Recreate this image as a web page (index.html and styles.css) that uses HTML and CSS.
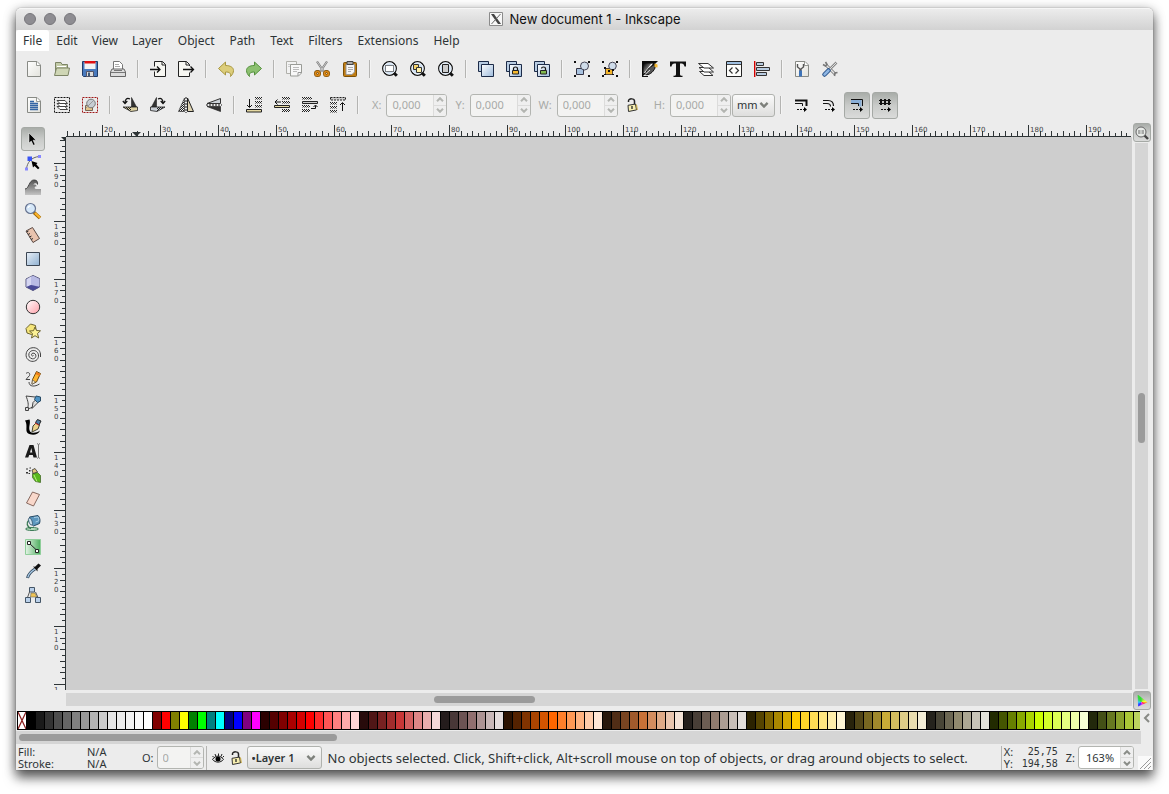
FILE: index.html
```html
<!DOCTYPE html>
<html lang="en">
<head>
<meta charset="utf-8">
<title>New document 1 - Inkscape</title>
<link rel="stylesheet" href="styles.css">
</head>
<body>
<svg class="defs" aria-hidden="true">
  <defs>
    <linearGradient id="g-blue" x1="0" y1="0" x2="1" y2="1"><stop offset="0" stop-color="#fff"/><stop offset="1" stop-color="#9dbbdc"/></linearGradient>
    <linearGradient id="g-sq" x1="0" y1="0" x2="1" y2="1"><stop offset="0" stop-color="#e9f0f8"/><stop offset="1" stop-color="#8fb0d0"/></linearGradient>
    <linearGradient id="g-pink" x1="0" y1="0" x2="1" y2="1"><stop offset="0" stop-color="#fff"/><stop offset="1" stop-color="#ff9fa8"/></linearGradient>
    <linearGradient id="g-green" x1="0" y1="0" x2="1" y2="0"><stop offset="0" stop-color="#e4f4e6"/><stop offset="1" stop-color="#4fae60"/></linearGradient>
    <linearGradient id="g-ink" x1="0" y1="0" x2="1" y2="1"><stop offset="0" stop-color="#000"/><stop offset="1" stop-color="#fff"/></linearGradient>
    <linearGradient id="g-paper" x1="0" y1="0" x2="1" y2="1"><stop offset="0" stop-color="#fff"/><stop offset="1" stop-color="#e2e2dc"/></linearGradient>
    <linearGradient id="g-wave" x1="0" y1="0" x2="0" y2="1"><stop offset="0" stop-color="#555"/><stop offset="1" stop-color="#c4c4c4"/></linearGradient>
    <pattern id="check" width="2" height="2" patternUnits="userSpaceOnUse"><path d="M0 0h1v1H0zM1 1h1v1H1z" fill="#222"/></pattern>
    <symbol id="chev-up" viewBox="0 0 8 5"><path d="M1 4.2 4 1.2l3 3" fill="none" stroke="currentColor" stroke-width="2"/></symbol>
    <symbol id="chev-down" viewBox="0 0 8 5"><path d="M1 .8 4 3.8l3-3" fill="none" stroke="currentColor" stroke-width="2"/></symbol>
    <symbol id="page" viewBox="0 0 16 16"><path d="M1.5.5h9.5l3.5 3.5v11.5h-13z" fill="url(#g-paper)" stroke="#888a85"/><path d="M10.5.8v3.7h3.7" fill="#fff" stroke="#999b96"/></symbol>
    <symbol id="lens" viewBox="0 0 16 16"><path d="m11.500 11.500 3.300 3.300" stroke="#111" stroke-width="3"/><circle cx="7.500" cy="7.500" r="6.800" fill="#cfe0f2" stroke="#111" stroke-width="1.300"/><circle cx="7.500" cy="7.500" r="5.700" fill="none" stroke="#fff" stroke-width=".8"/></symbol>
    <symbol id="twins" viewBox="0 0 16 16"><path d="M.5.5h10v10H.5z" fill="#b9cde3" stroke="#1c2b48"/><path d="M3.500 3.500h12v12h-12z" fill="url(#g-blue)" stroke="#1c2b48"/></symbol>
    <symbol id="lock" viewBox="0 0 16 16"><path d="M4.500 5V3.800c0-2.600 6-2.600 6 .2v3.500" fill="none" stroke="#222" stroke-width="1.500"/><path d="m4 8.300 7.500-1.200 1 5.800-8 1.600z" fill="#f7efb0" stroke="#333"/><path d="M12.500 7.500l.8 5.500" stroke="#c8a634"/><path d="M8 9v3" stroke="#222" stroke-width="1.300"/></symbol>
    <symbol id="group-shapes" viewBox="0 0 16 16"><path d="M0 0h2v2H0zM14 0h2v2h-2zM0 14h2v2H0zM14 14h2v2h-2z" fill="#111"/></symbol>
    <symbol id="bars" viewBox="0 0 16 16"><path d="M0 0h7v2.500H0zM0 4h7v2.500H0zM0 8h7v2.500H0z" fill="url(#check)"/></symbol>
  </defs>
</svg>

<div class="window">
  <header class="titlebar">
    <div class="lights"><i></i><i></i><i></i></div>
    <h1 class="title">
      <svg width="14" height="14" viewBox="0 0 14 14"><path d="M.5.5h13v13H.5z" fill="#f7f7f7" stroke="#8b8b8b"/><path d="M2 2h3l7 10H9z" fill="#444"/><path d="M11.500 2 2.500 12" stroke="#666" stroke-width="1"/></svg>
      New document 1 - Inkscape
    </h1>
  </header>

  <nav class="menubar">
    <button class="menu open">File</button><button class="menu">Edit</button><button class="menu">View</button><button class="menu">Layer</button><button class="menu wide">Object</button><button class="menu">Path</button><button class="menu wide">Text</button><button class="menu">Filters</button><button class="menu wide">Extensions</button><button class="menu">Help</button>
  </nav>

  <div class="toolbar">
    <button class="tb" aria-label="New"><svg class="ic"><use href="#page"/></svg></button>
    <button class="tb" aria-label="Open"><svg class="ic" viewBox="0 0 16 16"><path d="M1.500 13V1.500H7l1 2h5.500V7" fill="#c3cba8" stroke="#7c8465"/><path d="M3 5.500h9" stroke="#fff"/><path d="M.5 14.500 2.500 7h13l-1.500 7.500z" fill="#cfd6b5" stroke="#7c8465"/></svg></button>
    <button class="tb" aria-label="Save"><svg class="ic" viewBox="0 0 16 16"><path d="M.5.5h15v15h-14l-1-1z" fill="#4a7abd" stroke="#203c68"/><path d="M2.500 1h11v7h-11z" fill="#f2f2f2"/><path d="M2.500 0h11v2.500h-11z" fill="#e01010"/><path d="M4.500 10.500h7v5h-7z" fill="#ddd" stroke="#556"/><path d="M6 11.500h2V15H6z" fill="#3e5878"/></svg></button>
    <button class="tb" aria-label="Print"><svg class="ic" viewBox="0 0 16 16"><path d="M3.500 8V.5h6l3 3V8" fill="#fff" stroke="#777"/><path d="M5 3.500h4M5 5.500h5" stroke="#aaa"/><path d="M2 8h12l1.500 3v4.500H.5V11z" fill="#ddd" stroke="#666"/><path d="M1 11.500h14M4 9.500h8" stroke="#777"/></svg></button>
    <span class="sep"></span>
    <button class="tb" aria-label="Import"><svg class="ic" viewBox="0 0 16 16"><path d="M4.500 5.500v-5h8l3 3v12h-11v-5" fill="#f7f7f2" stroke="#222"/><path d="M12 .5v3.500h3.500" fill="none" stroke="#222"/><path d="M0 8.500h9M7 5.500l3 3-3 3" fill="none" stroke="#111" stroke-width="1.300"/></svg></button>
    <button class="tb" aria-label="Export"><svg class="ic" viewBox="0 0 16 16"><path d="M11.500 5V3.500l-3-3h-8v15h11v-4" fill="#f7f7f2" stroke="#222"/><path d="M8 .5v3.500h3.500" fill="none" stroke="#222"/><path d="M5 8.500h10M12.500 5.500l3 3-3 3" fill="none" stroke="#111" stroke-width="1.300"/></svg></button>
    <span class="sep"></span>
    <button class="tb" aria-label="Undo"><svg class="ic" viewBox="0 0 16 16"><path d="m.5 7.500 7-6.500v3.500c5 0 8 2 8 5 0 2-1 4-3 6 .5-3.500-1-4.500-5-4.500V14z" fill="#dccd7a" stroke="#a89740"/></svg></button>
    <button class="tb" aria-label="Redo"><svg class="ic" viewBox="0 0 16 16"><path d="m15.500 7.500-7-6.500v3.500c-5 0-8 2-8 5 0 2 1 4 3 6-.5-3.500 1-4.500 5-4.500V14z" fill="#8cc070" stroke="#54903d"/></svg></button>
    <span class="sep"></span>
    <button class="tb" aria-label="Copy"><svg class="ic" viewBox="0 0 16 16"><path d="M.5.5h10v12H.5z" fill="#f2f2f2" stroke="#b0b0ab"/><path d="M2 3.500h7M2 5.500h7" stroke="#ccc"/><path d="M4.500 3.500h11v8.500l-3 3h-8z" fill="#f8f8f8" stroke="#999b96"/><path d="M7 6.500h6M7 8.500h6M7 10.500h4" stroke="#bbb"/><path d="M12 15v-3.500h3.500" fill="none" stroke="#999"/></svg></button>
    <button class="tb" aria-label="Cut"><svg class="ic" viewBox="0 0 16 16"><path d="M3 .5 10 11M13 .5 6 11" stroke="#777" stroke-width="2.200"/><path d="M3 .5 10 11M13 .5 6 11" stroke="#ddd" stroke-width=".8"/><g fill="none" stroke="#7a4a00" stroke-width="3"><circle cx="3.500" cy="12.500" r="2"/><circle cx="12.500" cy="12.500" r="2"/></g><g fill="none" stroke="#d9881a" stroke-width="1.700"><circle cx="3.500" cy="12.500" r="2"/><circle cx="12.500" cy="12.500" r="2"/></g></svg></button>
    <button class="tb" aria-label="Paste"><svg class="ic" viewBox="0 0 16 16"><rect x="1.500" y="1.500" width="13" height="14" rx="1" fill="#c17d11" stroke="#7a4f08"/><path d="M4 3.500h8.500V11L10 13.500H4z" fill="#f6f6f6" stroke="#999"/><path d="M6 6.500h5M6 8.500h5M6 10.500h3" stroke="#aaa"/><path d="M5 .5h6v3H5z" fill="#aaa" stroke="#444"/></svg></button>
    <span class="sep"></span>
    <button class="tb" aria-label="Zoom selection"><svg class="ic" viewBox="0 0 16 16"><use href="#lens"/><path d="M3.500 4.500h8v6h-8z" fill="#fff" stroke="#111" stroke-dasharray="1 1"/></svg></button>
    <button class="tb" aria-label="Zoom drawing"><svg class="ic" viewBox="0 0 16 16"><use href="#lens"/><path d="M3.500 3.500h5v5h-5z" fill="#f7d36b" stroke="#333"/><path d="M6.500 6.500h5v5h-5z" fill="#fff0a8" stroke="#333"/></svg></button>
    <button class="tb" aria-label="Zoom page"><svg class="ic" viewBox="0 0 16 16"><use href="#lens"/><path d="M4.500 3.500h6v8h-6z" fill="#ccc" stroke="#222"/></svg></button>
    <span class="sep"></span>
    <button class="tb" aria-label="Duplicate"><svg class="ic"><use href="#twins"/></svg></button>
    <button class="tb" aria-label="Clone"><svg class="ic" viewBox="0 0 16 16"><use href="#twins"/><path d="M7.500 9V7.500c0-2 4-2 4 0V9" fill="none" stroke="#111" stroke-width="1.200"/><path d="M6.500 9.500h6v3.500h-6z" fill="#f5b92e" stroke="#222"/></svg></button>
    <button class="tb" aria-label="Unlink clone"><svg class="ic" viewBox="0 0 16 16"><use href="#twins"/><path d="M7.500 7.500c0-2 4-2 4 0V9" fill="none" stroke="#111" stroke-width="1.200"/><path d="M6.500 9.500h6v3.500h-6z" fill="#7fb84d" stroke="#222"/></svg></button>
    <span class="sep"></span>
    <button class="tb" aria-label="Group"><svg class="ic" viewBox="0 0 16 16"><use href="#group-shapes"/><path d="M2.500 7.500h7v6h-7z" fill="#a9c3e0" stroke="#334"/><circle cx="10.500" cy="5" r="4" fill="#cfdcea" stroke="#445"/></svg></button>
    <button class="tb" aria-label="Ungroup"><svg class="ic" viewBox="0 0 16 16"><use href="#group-shapes"/><path d="M3.500 7.500h7v6h-7z" fill="#f3b52b" stroke="#543"/><circle cx="10.500" cy="5" r="3.800" fill="#cfdcea" stroke="#445"/><path d="M2 6h2v2H2zM6 9h2v2H6zM10 8h2v2h-2zM2 13h2v1H2zM10 13h2v1h-2z" fill="#111"/></svg></button>
    <span class="sep"></span>
    <button class="tb" aria-label="Fill and stroke"><svg class="ic" viewBox="0 0 16 16"><path d="M0 0h16L0 16z" fill="#0a0a0a"/><path d="M1.500 2.500h9L1.500 13z" fill="url(#g-ink)"/><path d="m2 12 7-9 2-.5L4 12z" fill="#fff"/><path d="M13 3.500C9 5 5 8 3 13.500c4 1 8-2 10-6.500z" fill="#555" stroke="#111"/><path d="m12.500 2.500 3 1v3l-3-.5z" fill="#f4b72e"/><path d="m3 13.500 5-4.500" stroke="#ddd"/><path d="M0 15.500h6" stroke="#111"/></svg></button>
    <button class="tb" aria-label="Text and font"><svg class="ic" viewBox="0 0 16 16"><path d="M0 .5h16v5h-1.500C14 3 13 2.500 10 2.500V13c0 1.500.8 1.800 2.500 1.800V16h-9v-1.200C5.200 14.800 6 14.500 6 13V2.500C3 2.500 2 3 1.500 5.500H0z" fill="#111"/></svg></button>
    <button class="tb" aria-label="Layers"><svg class="ic" viewBox="0 0 16 16" fill="#fff" stroke="#333"><path d="M1.500 10.500h9l4.500 4H6z"/><path d="M1 6.500h9.500l5 4.500H6z"/><path d="M.5 2.500H10l5.500 4.500H6z"/></svg></button>
    <button class="tb" aria-label="XML editor"><svg class="ic" viewBox="0 0 16 16"><path d="M.5.500h15v15H.500z" fill="#fdfdfb" stroke="#222"/><path d="M1 1h14v2.500H1z" fill="#9fbfe0"/><path d="M1 3.500h14" stroke="#444"/><path d="m6.500 6.500-3 3 3 3M9.500 6.500l3 3-3 3" fill="none" stroke="#333" stroke-width="1.200"/></svg></button>
    <button class="tb" aria-label="Align"><svg class="ic" viewBox="0 0 16 16"><path d="M.7 0v16" stroke="#d40000" stroke-width="1.400"/><g fill="#b7cbe0" stroke="#333"><path d="M2.500 1.500h7v3h-7zM2.500 6.500h13v3h-13zM2.500 11.500h10v3h-10z"/></g></svg></button>
    <span class="sep"></span>
    <button class="tb" aria-label="Document properties"><svg class="ic" viewBox="0 0 16 16"><use href="#page"/><path d="M3.500 3v3l2.500 2v6M9.500 3v3L7 8v6" fill="none" stroke="#555" stroke-width="1.400"/><path d="M6.500 9.500v6" stroke="#3d73b8" stroke-width="3"/></svg></button>
    <button class="tb" aria-label="Preferences"><svg class="ic" viewBox="0 0 16 16"><path d="m4 4 9 9" stroke="#777" stroke-width="3"/><path d="m4 4 9 9" stroke="#e4e4e4" stroke-width="1.400"/><path d="M1 3.500 3.500 5 5 3.500 3.500 1M15.500 11.500l-2.500.5-.5 3" fill="none" stroke="#777" stroke-width="1.600"/><path d="M14.500 1.500 8 8" stroke="#888" stroke-width="2.500"/><path d="M14.500 1.500 8 8" stroke="#ddd"/><path d="m6.500 9.500-4 4" stroke="#244f86" stroke-width="4.500" stroke-linecap="round"/><path d="m6.500 9.500-4 4" stroke="#8db5e2" stroke-width="2.500" stroke-linecap="round"/></svg></button>
  </div>

  <div class="toolbar">
    <button class="tb" aria-label="Select all"><svg class="ic" viewBox="0 0 16 16"><use href="#page"/><path d="M4 4.500h4M4 6.500h8M4 8.500h8M4 10.500h8M4 12.500h8" stroke="#3465a4" stroke-width="1.300"/></svg></button>
    <button class="tb" aria-label="Select in all layers"><svg class="ic" viewBox="0 0 16 16"><path d="M.5.5h15v15H.5z" fill="none" stroke="#111" stroke-dasharray="2 1"/><g fill="#fff" stroke="#444"><path d="M3 9.500h8l2.500 3H6z"/><path d="M3 6.500h8l2.500 3H6z"/><path d="M3 3.500h8l2.500 3H6z"/></g></svg></button>
    <button class="tb" aria-label="Deselect"><svg class="ic" viewBox="0 0 16 16"><path d="M.5.500h15v15H.500z" fill="none" stroke="#a01818" stroke-dasharray="2 1"/><path d="M3.500 8.500h7v5h-7z" fill="#e3c48a" stroke="#765"/><circle cx="9" cy="6.500" r="4.300" fill="#c7cdd3" stroke="#777"/><path d="m4 11 7-7" stroke="#999"/></svg></button>
    <span class="sep"></span>
    <button class="tb" aria-label="Rotate left"><svg class="ic" viewBox="0 0 16 16"><path d="M9.500.5v9.500h5z" fill="#333" stroke="#222" stroke-width=".6"/><path d="m1 10 8 4.500 6.500-1v-3.500z" fill="#ddd2a4" stroke="#222" stroke-width=".8"/><path d="m1 10 8 4.500V10z" fill="url(#check)"/><path d="M8 2C5 .5 3 2 3 6M.8 4 3 6.500 5.300 4" fill="none" stroke="#111" stroke-width="1.200"/></svg></button>
    <button class="tb" aria-label="Rotate right"><svg class="ic" viewBox="0 0 16 16"><path d="M6.500.5v9.500h-5z" fill="#333" stroke="#222" stroke-width=".6"/><path d="m15 10-8 4.500-6.500-1v-3.500z" fill="#c9ced4" stroke="#222" stroke-width=".8"/><path d="m15 10-8 4.500V10z" fill="url(#check)"/><path d="M8 2c3-1.500 5 0 5 4M10.700 4 13 6.500 15.200 4" fill="none" stroke="#111" stroke-width="1.200"/></svg></button>
    <button class="tb" aria-label="Flip horizontal"><svg class="ic" viewBox="0 0 16 16"><path d="M6.500 1v13.500h-6z" fill="url(#check)" stroke="#333" stroke-width=".7"/><path d="M9.500 1v13.500h6z" fill="#ddd2b0" stroke="#222"/><path d="M8 0v16" stroke="#111" stroke-dasharray="2 1"/></svg></button>
    <button class="tb" aria-label="Flip vertical"><svg class="ic" viewBox="0 0 16 16"><path d="M14.500 6.500H1l13.500-5z" fill="#ccd2d8" stroke="#333"/><path d="M14.500 9.500H1l13.500 5z" fill="#333" stroke="#222" stroke-width=".7"/><path d="M0 8h16" stroke="#111" stroke-dasharray="2 1"/></svg></button>
    <span class="sep"></span>
    <button class="tb" aria-label="Lower to bottom"><svg class="ic" viewBox="0 0 16 16"><use href="#bars" x="9" width="16" height="16"/><path d="M3.500 2v8M1 8l2.500 2.500L6 8" fill="none" stroke="#111"/><path d="M.5 12.500h15v2.500H.5z" fill="#e6d9a2" stroke="#222"/></svg></button>
    <button class="tb" aria-label="Lower"><svg class="ic" viewBox="0 0 16 16"><path d="M8 0h8v2.500H8zM8 4h8v2.500H8zM8 12h8v3H8z" fill="url(#check)"/><path d="M.5 8.500h15v2H.5z" fill="#e6d9a2" stroke="#222"/><path d="M7 5H1M3.500 2.500 1 5l2.500 2.500" fill="none" stroke="#111"/></svg></button>
    <button class="tb" aria-label="Raise"><svg class="ic" viewBox="0 0 16 16"><path d="M0 0h10v2.500H0zM0 8h8v2.500H0zM0 12h8v3H0z" fill="url(#check)"/><path d="M.5 4.500h15v2H.5z" fill="#ccc" stroke="#222"/><path d="M9 11.500h4.500V8.500M11.500 10l2-2 2 2" fill="none" stroke="#111"/></svg></button>
    <button class="tb" aria-label="Raise to top"><svg class="ic" viewBox="0 0 16 16"><use href="#bars" y="5" width="16" height="16"/><path d="M.5.5h15v2.500H.5z" fill="#ccc" stroke="#222" stroke-dasharray="2 1"/><path d="M12.500 14V6M10 8l2.500-2.500L15 8" fill="none" stroke="#111"/></svg></button>
    <span class="sep"></span>
    <label class="flabel off" for="fx">X:</label>
    <span class="spin off"><input id="fx" value="0,000" disabled><span class="steps"><button disabled aria-label="Up"><svg><use href="#chev-up"/></svg></button><button disabled aria-label="Down"><svg><use href="#chev-down"/></svg></button></span></span>
    <label class="flabel off" for="fy">Y:</label>
    <span class="spin off"><input id="fy" value="0,000" disabled><span class="steps"><button disabled aria-label="Up"><svg><use href="#chev-up"/></svg></button><button disabled aria-label="Down"><svg><use href="#chev-down"/></svg></button></span></span>
    <label class="flabel off" for="fw">W:</label>
    <span class="spin off"><input id="fw" value="0,000" disabled><span class="steps"><button disabled aria-label="Up"><svg><use href="#chev-up"/></svg></button><button disabled aria-label="Down"><svg><use href="#chev-down"/></svg></button></span></span>
    <button class="tb" aria-label="Lock ratio"><svg class="ic"><use href="#lock"/></svg></button>
    <label class="flabel off" for="fh">H:</label>
    <span class="spin off"><input id="fh" value="0,000" disabled><span class="steps"><button disabled aria-label="Up"><svg><use href="#chev-up"/></svg></button><button disabled aria-label="Down"><svg><use href="#chev-down"/></svg></button></span></span>
    <span class="combo unit"><select aria-label="Unit"><option>mm</option></select><svg><use href="#chev-down"/></svg></span>
    <span class="sep"></span>
    <button class="tb" aria-label="Scale stroke width"><svg class="ic" viewBox="0 0 16 16"><path d="M2 3.500h11.500V9" fill="none" stroke="#111" stroke-width="2"/><path d="M2 6.500h7.500V9" fill="none" stroke="#111"/><path d="M4 12.500h9" stroke="#111" stroke-dasharray="2 1"/><path d="m11 10 3 2.500-3 2.500z"/></svg></button>
    <button class="tb" aria-label="Scale corners"><svg class="ic" viewBox="0 0 16 16"><path d="M2 3.500h5c4 0 5.500 2 5.500 5.500M2 6.500h4c2.500 0 3.500 1 3.500 3" fill="none" stroke="#111" stroke-width="1.200"/><path d="M4 12.500h9" stroke="#111" stroke-dasharray="2 1"/><path d="m11 10 3 2.500-3 2.500z"/></svg></button>
    <button class="tb on" aria-label="Move gradients"><svg class="ic" viewBox="0 0 16 16"><path d="M2 4.500h9v5" fill="none" stroke="#89aed6" stroke-width="3"/><path d="M2 2.500h11.500V9M2 6.500h7.500V9" fill="none" stroke="#111"/><path d="M4 12.500h9" stroke="#111" stroke-dasharray="2 1"/><path d="m11 10 3 2.500-3 2.500z"/></svg></button>
    <button class="tb on" aria-label="Move patterns"><svg class="ic" viewBox="0 0 16 16"><path d="M2 3.500h12M2 6.500h12" stroke="#111"/><path d="M4 2v6M8 2v6M12 2v6" stroke="#111" stroke-width="2"/><path d="M4 12.500h9" stroke="#111" stroke-dasharray="2 1"/><path d="m11 10 3 2.500-3 2.500z"/></svg></button>
  </div>

  <main class="work">
    <div class="tools">
      <button class="tool on" aria-label="Select"><svg class="ic" viewBox="0 0 16 16"><path d="M4 2v10l2.300-2 2 4.300 1.800-.8-2-4.300h3z" fill="#000" stroke="#fff" stroke-width=".5"/></svg></button>
      <button class="tool" aria-label="Node"><svg class="ic" viewBox="0 0 16 16"><path d="M1.500 14C2 8 6 2 14.500 1.500" fill="none" stroke="#666"/><path d="M0 12.500h3v3H0zM13 0h3v3h-3z" fill="#8888ff"/><path d="M2.500 1.500h4.500v4.500H2.500z" fill="#3a55f5"/><path d="m6.500 6 6 2-1.200 1.300 3.200 3.700-1.500 1.300L9.500 11 8 12.500z"/></svg></button>
      <button class="tool" aria-label="Tweak"><svg class="ic" viewBox="0 0 16 16"><path d="M0 10c4 0 4-9 9-9 3 0 4 2 3.500 4.500C11 3.500 9 4 8.500 6c2-1 3 0 3 1.500-2-.5-2.500 2-.5 2.500h5v6H0z" fill="url(#g-wave)"/><path d="M0 10c4 0 4-9 9-9 3 0 4 2 3.500 4.500" fill="none" stroke="#444"/></svg></button>
      <button class="tool" aria-label="Zoom"><svg class="ic" viewBox="0 0 16 16"><path d="m9 9.500 6 5.500" stroke="#9c6500" stroke-width="3.500"/><path d="m10 10 5 4.700" stroke="#fdb52c" stroke-width="2.200"/><circle cx="5.500" cy="5.500" r="5" fill="#d5e7f8" stroke="#667390" stroke-width="1.200"/><path d="M3 5c.3-1.500 1.200-2 2.500-2" fill="none" stroke="#fff" stroke-width="1.200"/></svg></button>
      <button class="tool" aria-label="Measure"><svg class="ic" viewBox="0 0 16 16"><path d="m1 4 6.500-3.500 7 11L8 15.500z" fill="#e9c3ae" stroke="#5b4a44"/><path d="m1.500 5 2-1M3 7.500l2-1M4.500 10l2-1M6 12.500l2-1" stroke="#333"/></svg></button>
      <button class="tool" aria-label="Rectangle"><svg class="ic" viewBox="0 0 16 16"><path d="M1.500 1.500h13v13h-13z" fill="url(#g-sq)" stroke="#3c4653"/></svg></button>
      <button class="tool" aria-label="3D box"><svg class="ic" viewBox="0 0 16 16"><path d="M1 4 8 .5l6.500 3v8.500L8 15.500 1 12z" fill="#8f91cc" stroke="#55557a"/><path d="M1.500 4.300 6 1.500v8.500l-4.500 2z" fill="#d5d6f1"/><path d="M6 1.500 8.500 1l6 3v7.500L6 10z" fill="#b9bbe4"/><path d="m6 10 8.500 2L8 15.500 1.500 12z" fill="#4a4a96"/></svg></button>
      <button class="tool" aria-label="Ellipse"><svg class="ic" viewBox="0 0 16 16"><circle cx="8" cy="8" r="6.700" fill="url(#g-pink)" stroke="#333"/></svg></button>
      <button class="tool" aria-label="Star"><svg class="ic" viewBox="0 0 16 16"><path d="m1 5.500 4.500-4.500 5 1.500.5 5-4.500 4-4.500-1.500z" fill="#f6e67a" stroke="#6d6430"/><path d="m10 4 1.500 3.500 4 .3-3 2.700 1.200 4.500-3.700-2.300L6.500 15l1-4.300-3-2.700 4-.3z" fill="#fbf195" stroke="#6d6430"/></svg></button>
      <button class="tool" aria-label="Spiral"><svg class="ic" viewBox="0 0 16 16"><path d="M8.500 8.500c-.5 1-2 .5-2-.8 0-1.700 2.500-2.200 3.700-.7C12 9.500 10 12 7.500 11.800 4.500 11.500 3.300 9 4 6.500 5 3.500 9 2.500 11.500 4.500c3 2.500 2.500 7-.5 9-3.500 2-8 .5-9.500-3C0 6 2.500 1.500 7 .8c5-.8 8 2.500 8.500 6.200v3" fill="none" stroke="#444"/></svg></button>
      <button class="tool" aria-label="Pencil"><svg class="ic" viewBox="0 0 16 16"><path d="M1 2.500C3 .5 5.500 2 4.500 4.500L1 8.500h4M4 11c0 5 6 5 10.500 2" fill="none" stroke="#444"/><path d="m7 13 .5-4.500 4-8 4 2-4 8.500z" fill="#ffb52d" stroke="#6d4b14"/><path d="m11.500 1 4 2-1 2-4-2z" fill="#ef7a1a"/><path d="m7.500 9 3 2L7 13.500z" fill="#fff2d0" stroke="#444" stroke-width=".6"/></svg></button>
      <button class="tool" aria-label="Bezier"><svg class="ic" viewBox="0 0 16 16"><path d="M2 14c6-1 8-4 10-8M1 1c2 5 3 9 1.500 12M1 1l9 1" fill="none" stroke="#444"/><path d="M.5 12.500h3v3h-3zM12 3.500l1 4-6 6 1-6z" fill="#ddd" stroke="#444"/><path d="m11 1 4.500 1v4l-3 1.500-3-3z" fill="#4f93c4" stroke="#274b66"/></svg></button>
      <button class="tool" aria-label="Calligraphy"><svg class="ic" viewBox="0 0 16 16"><path d="M0 1.500 4.500.5C6 4 3 8 5 12.500c2 2 7 1.500 10-1-2 5-9 5-12.500 2.500C0 11 3 6 0 1.500z"/><path d="m7 13 1-6 3-3 3.500 2-1.500 4z" fill="#ecd28a" stroke="#443"/><path d="m10.500 3.500 2-3 3.500 1.500-2 4z" fill="#4c7fa8" stroke="#222"/><path d="m10 4 4 2.200" stroke="#c33"/></svg></button>
      <button class="tool" aria-label="Text"><svg class="ic" viewBox="0 0 16 16"><path fill-rule="evenodd" d="M0 14.500 4.500 2h4L12 14.500H8.500L7.800 12H4.200l-.9 2.500zM5 9.500h2.300L6.300 5z" fill="#1a1a1a"/><path d="M13.500 1.500v13M12 .5l1.500 1 1.500-1M12 15.500l1.500-1 1.500 1" fill="none" stroke="#777"/></svg></button>
      <button class="tool" aria-label="Spray"><svg class="ic" viewBox="0 0 16 16"><path d="M1 1.500h2v1H1zM4 3h1.500v1.500H4zM1 5h2v1.500H1zM4.500.5H6v1H4.500zM3.500 6H5v1H3.500z" fill="#333"/><path d="m7.500 6.500 5-1 3 3v7l-5-1-3-4z" fill="#59b81d" stroke="#3b5e20" stroke-width=".7"/><path d="m7 3 3-1.500 2.500 3.500-4.500 1.500z" fill="#e4c680" stroke="#333" stroke-width=".8"/><path d="m9 8 3 6.500" stroke="#b6ee7c"/></svg></button>
      <button class="tool" aria-label="Eraser"><svg class="ic" viewBox="0 0 16 16"><path d="M7.500 1 14.500 3.500 8.500 15 1.500 12z" fill="#f9d8cb" stroke="#7a5a50" stroke-width=".9"/></svg></button>
      <button class="tool" aria-label="Paint bucket"><svg class="ic" viewBox="0 0 16 16"><ellipse cx="7" cy="14" rx="6.500" ry="1.500" fill="#b9dfc0" stroke="#3b7a55"/><path d="M4 5c-3 3-2 7 2 8.500" fill="none" stroke="#3b7a55" stroke-width="1.500"/><path d="m4.500 2 8.500-1.500c2 2 2.500 5 1.500 8L8.500 11C5.500 9 4 5 4.500 2z" fill="#5c97be" stroke="#274b66"/><path d="M9 2.500 13 2c1 1.500 1 3 .5 4l-3 1" fill="none" stroke="#a8cde4"/><ellipse cx="5.500" cy="6.500" rx="1.600" ry="3.800" transform="rotate(-20 5.500 6.500)" fill="#cfe3ee" stroke="#274b66" stroke-width=".7"/></svg></button>
      <button class="tool" aria-label="Gradient"><svg class="ic" viewBox="0 0 16 16"><path d="M.5.500h15v15H.500z" fill="url(#g-green)" stroke="#8fce9a"/><path d="m4 4 8 7.500" stroke="#222"/><path d="M2.500 2.500h3v3h-3zM10.500 10.500h3v3h-3z" fill="#fff" stroke="#222"/></svg></button>
      <button class="tool" aria-label="Dropper"><svg class="ic" viewBox="0 0 16 16"><path d="M10 6C6 8.500 3.500 11 2.500 15" fill="none" stroke="#34495e" stroke-width="3"/><path d="M10 6C6 8.500 3.500 11 2.700 14.500" fill="none" stroke="#a9cbe6" stroke-width="1.200"/><path d="m8 3.500 2 .2L13.500.5 16 2.500 12.500 6v2.500z" fill="#111"/></svg></button>
      <button class="tool" aria-label="Connector"><svg class="ic" viewBox="0 0 16 16"><path d="M4.500 5 2.500 10.500M10.500 5l2.500 5.500" stroke="#555"/><path d="m6 6 4 0 2 4H5.500z" fill="#f0c455" stroke="#665" stroke-width=".6"/><g fill="#b9d0ea" stroke="#445566"><path d="M4.500.5h5v4.500h-5zM.5 10.500h5v5h-5zM10.500 10.500h5v5h-5z"/></g></svg></button>
    </div>

    <div class="sheet">
      <svg class="ruler-x" id="ruler-x"></svg>
      <svg class="ruler-y" id="ruler-y"></svg>
      <div class="canvas"></div>
      <div class="hscroll"><div class="hthumb"></div></div>
    </div>

    <div class="side">
      <button class="corner" aria-label="Zoom if resized"><svg width="14" height="14" viewBox="0 0 14 14"><path d="m9 9 4 4" stroke="#444" stroke-width="2.400"/><circle cx="6" cy="6" r="5" fill="#e8ebe8" stroke="#666"/><path d="M4 4v4M8 4v4M6 4.500v1M6 6.500v1" stroke="#666"/></svg></button>
      <div class="vscroll"><div class="vthumb"></div></div>
      <button class="corner" aria-label="Color management"><span class="cms"></span></button>
    </div>
  </main>

  <div class="palette-row">
    <div class="palette" id="palette"></div>
    <button class="collapse" aria-label="Palette menu"><svg width="7" height="10" viewBox="0 0 7 10"><path d="M6 1 2 5l4 4" fill="none" stroke="#888a85" stroke-width="2"/></svg></button>
  </div>
  <div class="pscroll"><div class="pthumb"></div></div>

  <footer class="status">
    <div class="style"><span>Fill:</span><span>N/A</span><span>Stroke:</span><span>N/A</span></div>
    <label class="flabel" for="fo">O:</label>
    <span class="spin off opacity"><input id="fo" value="0" disabled><span class="steps"><button disabled aria-label="Up"><svg><use href="#chev-up"/></svg></button><button disabled aria-label="Down"><svg><use href="#chev-down"/></svg></button></span></span>
    <span class="vline"></span>
    <button class="mini" aria-label="Layer visibility"><svg class="ic" viewBox="0 0 16 16"><path d="M2.500 9.500c3-4.500 8-4.500 11 0-3 3.500-8 3.500-11 0z" fill="#ddd" stroke="#222"/><circle cx="8" cy="9" r="2.500"/><path d="M2.500 6 4 7.500M5 4l1 2.500M8.500 3.500V6M12 4l-1 2.500M14 6l-1.500 1.500" stroke="#222"/></svg></button>
    <button class="mini" aria-label="Layer lock"><svg class="ic"><use href="#lock"/></svg></button>
    <span class="combo layer"><select aria-label="Layer"><option>•Layer 1</option></select><svg><use href="#chev-down"/></svg></span>
    <p class="message">No objects selected. Click, Shift+click, Alt+scroll mouse on top of objects, or drag around objects to select.</p>
    <span class="vline"></span>
    <div class="coords"><span>X:</span><span class="num">25,75</span><span>Y:</span><span class="num">194,58</span></div>
    <label class="flabel" for="fz">Z:</label>
    <span class="spin zoom"><input id="fz" value="163%"><span class="steps"><button aria-label="Zoom in"><svg><use href="#chev-up"/></svg></button><button aria-label="Zoom out"><svg><use href="#chev-down"/></svg></button></span></span>
    <svg class="grip" width="14" height="14" viewBox="0 0 14 14"><path d="M0 0h14v14H0z" fill="#fafafa"/><path d="M2 13 13 2M6 13l7-7M10 13l3-3" stroke="#999"/></svg>
  </footer>
</div>
<script src="app.js"></script>
</body>
</html>
```
FILE: styles.css
```css
* { box-sizing: border-box; }
body {
  margin: 0;
  height: 100vh;
  padding: 8px 16px 24px;
  background: #fff;
  color: #2e3436;
  font: 12px/16px "Noto Sans", "Open Sans", sans-serif;
}
button, input, select { font: inherit; color: inherit; margin: 0; padding: 0; border: 0; background: none; }
button { display: flex; align-items: center; justify-content: center; }
.defs { position: absolute; width: 0; height: 0; }
.ic { width: 16px; height: 16px; display: block; overflow: visible; }

.window {
  height: 100%;
  display: flex;
  flex-direction: column;
  background: #ececec;
  border-radius: 5px 5px 0 0;
  box-shadow: 0 0 1px rgba(0,0,0,.6), 0 8px 12px rgba(0,0,0,.55), 0 2px 12px rgba(0,0,0,.35);
}

.titlebar {
  height: 22px;
  flex: none;
  display: grid;
  grid-template-columns: 1fr auto 1fr;
  align-items: start;
  background: linear-gradient(#ececec, #d2d2d2);
  border-top: 1px solid #f6f6f6;
  border-radius: 5px 5px 0 0;
}
.lights { display: flex; gap: 8px; padding: 4px 0 0 8px; }
.lights i { width: 12px; height: 12px; border-radius: 50%; background: #8e8d92; border: 1px solid #77767b; }
.title { display: flex; align-items: center; gap: 7px; margin: 0; font: 13px/20px Inter, sans-serif; color: #111; }

.menubar { display: flex; height: 21px; flex: none; }
.menu { padding: 0 7px; height: 21px; font-size: 12px; }
.menu.wide { padding: 0 8px; }
.menu.open { background: #fff; border-radius: 3px 3px 0 0; }

.toolbar { display: flex; align-items: center; height: 36px; padding-left: 4px; flex: none; }
.tb { width: 28px; height: 28px; flex: none; }
.tb.on, .tool.on, .corner {
  border: 1px solid #a5a9a5;
  border-radius: 3px;
  background: linear-gradient(#a9ada9, #c9cbc9 50%, #dadbda);
}
.tb.on { width: 26px; height: 27px; margin: 0 1px; }
.sep { width: 2px; height: 18px; margin: 0 5px; flex: none; background: linear-gradient(90deg, #b4b4b2 50%, #f4f4f4 50%); }

.flabel { padding: 0 5px 0 8px; font-size: 11px; }
.off { color: #a8aaa7; }
.spin {
  display: flex;
  width: 61px;
  height: 23px;
  flex: none;
  background: #f3f3f2;
  border: 1px solid #b3b5b1;
  border-radius: 3px;
  overflow: hidden;
}
.spin input { flex: 1; min-width: 0; padding-left: 5px; outline: 0; font-size: 11px; }
.steps { width: 13px; display: flex; flex-direction: column; background: #efefef; border-left: 1px solid #dcdcdb; color: #b4b6b2; }
.steps button { flex: 1; color: inherit; }
.steps button + button { border-top: 1px solid #dcdcdb; }
.steps svg { width: 8px; height: 5px; display: block; }
.combo {
  display: flex;
  align-items: center;
  height: 23px;
  flex: none;
  padding: 0 5px 0 4px;
  border: 1px solid #b0b2ae;
  border-radius: 3px;
  background: linear-gradient(#fafafa, #dededd);
}
.combo select { appearance: none; flex: 1; min-width: 0; outline: 0; font-size: 11px; }
.combo svg { width: 10px; height: 6px; color: #7d807b; }
.unit { width: 43px; margin-left: 1px; }

.work { flex: 1; min-height: 0; display: flex; }
.tools { width: 38px; flex: none; padding: 4px 0 0 5px; }
.tool { width: 24px; height: 24px; }
.sheet {
  flex: 1;
  min-width: 0;
  display: grid;
  grid-template: 14px 1fr 20px / 12px 1fr;
}
.ruler-x { grid-area: 1 / 2; width: 100%; height: 14px; }
.ruler-y { grid-area: 2 / 1; width: 12px; height: 100%; }
.ruler-x text, .ruler-y text { font: 7px "DejaVu Sans", sans-serif; fill: #3c4043; }
.canvas { grid-area: 2 / 2; background: #cecece; }
.hscroll { grid-area: 3 / 2; height: 13px; margin-top: 3px; padding: 3px 0; background: #d5d5d5; }
.hthumb { width: 101px; height: 7px; margin-left: 368px; border-radius: 4px; background: #9b9b9b; }
.side { width: 21px; flex: none; display: flex; flex-direction: column; align-items: flex-start; }
.corner { width: 18px; height: 19px; margin-left: 1px; flex: none; }
.vscroll { flex: 1; width: 13px; margin: 1px 0 2px 3px; padding: 250px 3px 0; background: #d5d5d5; }
.vthumb { height: 50px; border-radius: 4px; background: #9b9b9b; }
.cms { width: 11px; height: 12px; clip-path: polygon(10% 0, 100% 65%, 15% 100%); background: conic-gradient(from 0deg at 40% 60%, #4d4, #ff3 80deg, #f33 110deg, #f3f 160deg, #33f 220deg, #3cf 270deg, #3d3 330deg); }

.palette-row { display: flex; height: 20px; flex: none; margin-top: 1px; }
.palette { flex: 1; min-width: 0; display: flex; height: 19px; margin-left: 1px; border: 1px solid #000; border-right: 0; overflow: hidden; background: #000; }
.swatch { width: 8px; margin-right: 1px; flex: none; }
.swatch.none { background: #fff; }
.swatch svg { display: block; width: 8px; height: 17px; }
.collapse { width: 13px; height: 14px; }
.pscroll { flex: none; height: 13px; margin-right: 12px; padding: 3px; background: #d5d5d5; }
.pthumb { width: 318px; height: 7px; border-radius: 4px; background: #9b9b9b; }

.status { display: flex; align-items: center; height: 26px; padding-top: 1px; flex: none; }
.style, .coords { display: grid; line-height: 12px; font-size: 11px; }
.style { grid-template-columns: 69px 47px; padding-left: 2px; }
.status .flabel { padding: 0 3px 0 8px; }
.opacity { width: 47px; }
.vline { width: 1px; height: 24px; margin: 0 2px; background: #b4b4b2; }
.mini { width: 18px; height: 18px; }
.layer { width: 75px; margin-left: 2px; font-weight: 600; }
.message { flex: 1; min-width: 0; margin: 0; padding-left: 6px; font-size: 13px; white-space: nowrap; overflow: hidden; }
.coords { grid-template-columns: 16px 38px; }
.coords .num { text-align: right; font: 10px/12px "DejaVu Sans Mono", monospace; }
.zoom { width: 56px; background: #fff; }
.zoom input { padding-left: 7px; }
.zoom .steps { color: #8a8d88; }
.grip { align-self: flex-end; margin-left: 4px; margin-right: 1px; }
```
FILE: app.js
```js
const NS = 'http://www.w3.org/2000/svg';
const STEP = 5.788;

function add(parent, name, attrs, text) {
  const el = document.createElementNS(NS, name);
  for (const key in attrs) el.setAttribute(key, attrs[key]);
  if (text !== undefined) el.textContent = text;
  parent.appendChild(el);
}

function tickLength(i) {
  if (i % 10 === 0) return 11;
  return i % 2 === 0 ? 5 : 3;
}

function drawRulers() {
  const rx = document.getElementById('ruler-x');
  const ry = document.getElementById('ruler-y');
  const w = rx.getBoundingClientRect().width;
  const h = ry.getBoundingClientRect().height;
  rx.replaceChildren();
  ry.replaceChildren();

  add(rx, 'rect', { x: 0, y: 13, width: w - 1, height: 1, fill: '#2e3436' });
  for (let i = -6; 36 + i * STEP < w - 1; i++) {
    const x = Math.round(36 + i * STEP);
    const len = tickLength(i);
    add(rx, 'rect', { x: x, y: 13 - len, width: 1, height: len, fill: '#2e3436' });
    if (i % 10 === 0) add(rx, 'text', { x: x + 2, y: 9 }, 20 + i);
  }
  add(rx, 'path', { d: 'M66 9h9l-4.5 4.500z', fill: '#2e3436' });

  add(ry, 'rect', { x: 11, y: 0, width: 1, height: h, fill: '#2e3436' });
  for (let i = -4; 26 + i * STEP < h; i++) {
    const y = Math.round(26 + i * STEP);
    const len = tickLength(i);
    add(ry, 'rect', { x: 11 - len, y: y, width: len, height: 1, fill: '#2e3436' });
    if (i % 10 === 0) {
      String(190 - i).split('').forEach((c, n) => {
        const base = y + 8 + n * 8;
        if (base < h + 5) add(ry, 'text', { x: 0, y: base }, c);
      });
    }
  }
  add(ry, 'path', { d: 'M7 0h4v4z', fill: '#2e3436' });
}

const COLORS = ('000000 1a1a1a 333333 4d4d4d 666666 808080 999999 b3b3b3 cccccc e6e6e6 ececec f2f2f2 f9f9f9 ffffff ' +
  '800000 ff0000 808000 ffff00 008000 00ff00 008080 00ffff 000080 0000ff 800080 ff00ff ' +
  '2b0000 550000 800000 aa0000 d40000 ff0000 ff2a2a ff5555 ff8080 ffaaaa ffd5d5 ' +
  '280b0b 501616 782121 a02c2c c83737 d35f5f de8787 e9afaf f4d7d7 ' +
  '241c1c 483737 6c5353 916f6f ac9393 c8b7b7 e3dbdb ' +
  '2b1100 552200 803300 aa4400 d45500 ff6600 ff7f2a ff9955 ffb380 ffccaa ffe6d5 ' +
  '28170b 502d16 784421 a05a2c c87137 d38d5f deaa87 e9c6af f4e3d7 ' +
  '241f1c 483e37 6c5d53 917c6f ac9d93 c8beb7 e3dedb ' +
  '2b2200 554400 806600 aa8800 d4aa00 ffcc00 ffd42a ffdd55 ffe680 ffeeaa fff6d5 ' +
  '28220b 504416 786721 a0892c c8ab37 d3bc5f decd87 e9ddaf f4eed7 ' +
  '24221c 484537 6c6753 918a6f aca793 c8c4b7 e3e2db ' +
  '222b00 445500 668000 88aa00 aad400 ccff00 d4ff2a ddff55 e5ff80 eeffaa f6ffd5 ' +
  '22280b 445016 677821 89a02c abc837 bcd35f cdde87 dde9af eef4d7').split(' ');

function drawPalette() {
  const palette = document.getElementById('palette');
  const none = document.createElement('span');
  none.className = 'swatch none';
  const svg = document.createElementNS(NS, 'svg');
  add(svg, 'path', { d: 'M0 0 8 17M8 0 0 17', stroke: '#8b2020', 'stroke-width': 1.2 });
  none.appendChild(svg);
  palette.appendChild(none);
  for (const c of COLORS) {
    const s = document.createElement('span');
    s.className = 'swatch';
    s.style.background = '#' + c;
    palette.appendChild(s);
  }
}

drawPalette();
drawRulers();
window.addEventListener('resize', drawRulers);
```
